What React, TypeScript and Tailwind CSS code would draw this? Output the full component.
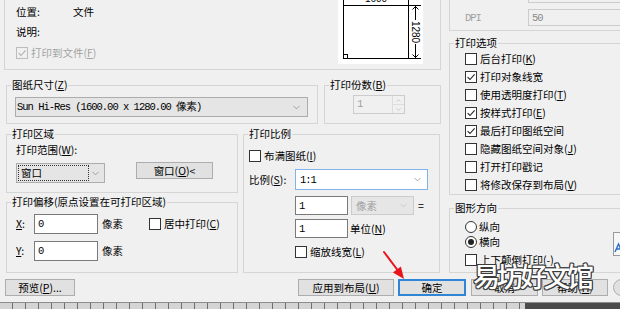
import { ChevronDown, ChevronUp } from "lucide-react";
import type { ReactNode } from "react";

const mono = "font-['Liberation_Mono',monospace] text-[10.5px] tracking-[-1px]";

function Group({ label, className = "", children }: { label?: ReactNode; className?: string; children?: ReactNode }) {
    return (
        <div className={`relative shrink-0 border border-[#d5d5d5] ${className}`}>
            {label && (
                <span className="absolute left-[4px] top-[-9px] whitespace-nowrap bg-[#f0f0f0] px-[1px] leading-[16px]">
                    {label}
                </span>
            )}
            {children}
        </div>
    );
}

function Check({ checked = false, disabled = false, children }: { checked?: boolean; disabled?: boolean; children: ReactNode }) {
    return (
        <div className="flex h-[18px] items-center whitespace-nowrap">
            <span
                className={`flex h-[12px] w-[12px] shrink-0 items-center justify-center border ${
                    disabled ? "border-[#bcbcbc] bg-[#f0f0f0]" : "border-[#333333] bg-white"
                }`}
            >
                {checked && (
                    <svg width="10" height="10" viewBox="0 0 10 10">
                        <path d="M1.6 5.1 4 7.5 8.6 2.3" fill="none" stroke={disabled ? "#b0b0b0" : "#222"} strokeWidth="1.1" />
                    </svg>
                )}
            </span>
            <span className={`ml-[3px] ${disabled ? "text-[#a3a3a3]" : ""}`}>{children}</span>
        </div>
    );
}

function Radio({ checked = false, children }: { checked?: boolean; children: ReactNode }) {
    return (
        <div className="flex h-[15px] items-center whitespace-nowrap">
            <span className="flex h-[12px] w-[12px] shrink-0 items-center justify-center rounded-full border border-[#333333] bg-white">
                {checked && <span className="h-[6px] w-[6px] rounded-full bg-[#222]" />}
            </span>
            <span className="ml-[2px]">{children}</span>
        </div>
    );
}

function Btn({ className = "", focused = false, children }: { className?: string; focused?: boolean; children?: ReactNode }) {
    return (
        <div
            className={`flex h-[17px] shrink-0 items-center justify-center whitespace-nowrap bg-[#e1e1e1] ${
                focused ? "border-2 border-[#2f86d6]" : "border border-[#adadad]"
            } ${className}`}
        >
            {children}
        </div>
    );
}

function Edit({ value, className = "" }: { value: string; className?: string }) {
    return (
        <div className={`flex shrink-0 items-center border border-[#7a7a7a] bg-white pl-[3px] ${mono} ${className}`}>
            {value}
        </div>
    );
}

function PaperPreview() {
    return (
        <svg width="85" height="75" viewBox="0 0 85 75">
            <line x1="5.5" y1="3" x2="5.5" y2="16" stroke="#000" />
            <line x1="70.5" y1="3" x2="70.5" y2="16" stroke="#000" />
            <line x1="6" y1="9.5" x2="25" y2="9.5" stroke="#000" />
            <line x1="51" y1="9.5" x2="70" y2="9.5" stroke="#000" />
            <text x="38" y="13" textAnchor="middle" fontSize="10" fontFamily="Liberation Sans, sans-serif">
                1600
            </text>
            <rect x="5.5" y="16.5" width="65" height="53" fill="#fff" stroke="#000" />
            <rect x="5.5" y="65.5" width="4" height="4" fill="none" stroke="#000" />
            <line x1="71" y1="16.5" x2="83" y2="16.5" stroke="#000" />
            <line x1="71" y1="69.5" x2="83" y2="69.5" stroke="#000" />
            <line x1="77.5" y1="17" x2="77.5" y2="31" stroke="#000" />
            <line x1="77.5" y1="55" x2="77.5" y2="69" stroke="#000" />
            <path d="M74.5 20.5 77.5 17.5 80.5 20.5 M74.5 65.5 77.5 68.5 80.5 65.5" fill="none" stroke="#000" />
            <text
                transform="translate(74 43) rotate(90)"
                textAnchor="middle"
                fontSize="10"
                fontFamily="Liberation Sans, sans-serif"
            >
                1280
            </text>
        </svg>
    );
}

export default function App() {
    return (
        <div className="relative h-[309px] w-[620px] overflow-hidden bg-[#f0f0f0] font-['Noto_Sans_CJK_SC',sans-serif] text-[10.5px] leading-[16px] text-black">
            <div className="flex pl-[4px]">
                {/* left side */}
                <div className="flex w-[438px] shrink-0 flex-col">
                    {/* printer */}
                    <Group className="mt-[-12px] flex h-[82px] w-[437px]">
                        <div className="flex flex-col pl-[11px] pt-[13px]">
                            <div className="flex h-[20px] items-center">
                                <span className="w-[57px]">位置:</span>
                                <span>文件</span>
                            </div>
                            <div className="flex h-[20px] items-center">说明:</div>
                            <div className="mt-[2px]">
                                <Check checked disabled>
                                    打印到文件(<u>F</u>)
                                </Check>
                            </div>
                        </div>
                        <div className="ml-auto mr-[17px] h-[75px] w-[85px] bg-white">
                            <PaperPreview />
                        </div>
                    </Group>

                    {/* paper size + copies */}
                    <div className="mt-[15px] flex">
                        <Group
                            label={
                                <>
                                    图纸尺寸(<u>Z</u>)
                                </>
                            }
                            className="ml-[2px] h-[39px] w-[312px]"
                        >
                            <div className="ml-[8px] mt-[11px] flex h-[20px] w-[293px] items-center border border-[#adadad] bg-[#e5e5e5] pl-[1px]">
                                <span className={`${mono} whitespace-nowrap`}>Sun Hi-Res (1600.00 x 1280.00 像素)</span>
                                <ChevronDown className="ml-auto mr-[5px]" size={11} strokeWidth={1} color="#555" />
                            </div>
                        </Group>
                        <Group
                            label={
                                <>
                                    打印份数(<u>B</u>)
                                </>
                            }
                            className="ml-[6px] h-[39px] w-[117px]"
                        >
                            <div className="ml-[28px] mt-[9px] flex h-[19px] w-[52px] border border-[#cccccc] bg-[#f0f0f0]">
                                <span className={`pl-[3px] leading-[17px] text-[#a0a0a0] ${mono}`}>1</span>
                                <div className="ml-auto flex w-[12px] flex-col border-l border-[#dddddd]">
                                    <div className="flex flex-1 items-center justify-center border-b border-[#dddddd]">
                                        <ChevronUp size={7} strokeWidth={1.5} color="#999" />
                                    </div>
                                    <div className="flex flex-1 items-center justify-center">
                                        <ChevronDown size={7} strokeWidth={1.5} color="#999" />
                                    </div>
                                </div>
                            </div>
                        </Group>
                    </div>

                    {/* area / offset / scale */}
                    <div className="mt-[10px] flex">
                        <div className="ml-[2px] flex w-[232px] shrink-0 flex-col">
                            <Group label="打印区域" className="h-[59px] w-[232px]">
                                <div className="pl-[9px] pt-[6px]">
                                    <div className="flex h-[18px] items-center">
                                        打印范围(<u>W</u>):
                                    </div>
                                    <div className="mt-[3px] flex items-start">
                                        <div className="mt-[1px] flex h-[20px] w-[89px] shrink-0 items-center border border-[#adadad] bg-[#e5e5e5] pl-[1px]">
                                            <span className="flex h-[16px] w-[71px] items-center border border-dotted border-[#333] pl-[2px]">
                                                窗口
                                            </span>
                                            <ChevronDown className="ml-auto mr-[3px]" size={11} strokeWidth={1} color="#555" />
                                        </div>
                                        <Btn className="ml-[31px] w-[77px]">
                                            窗口(<u>O</u>)&lt;
                                        </Btn>
                                    </div>
                                </div>
                            </Group>
                            <Group label="打印偏移(原点设置在可打印区域)" className="mt-[9px] h-[71px] w-[232px]">
                                <div className="pl-[9px] pt-[11px]">
                                    <div className="flex h-[20px] items-center">
                                        <span className="w-[18px]">
                                            <u>X</u>:
                                        </span>
                                        <Edit value="0" className="h-[20px] w-[64px]" />
                                        <span className="ml-[4px]">像素</span>
                                        <div className="ml-[26px]">
                                            <Check>
                                                居中打印(<u>C</u>)
                                            </Check>
                                        </div>
                                    </div>
                                    <div className="mt-[7px] flex h-[20px] items-center">
                                        <span className="w-[18px]">
                                            <u>Y</u>:
                                        </span>
                                        <Edit value="0" className="h-[20px] w-[64px]" />
                                        <span className="ml-[4px]">像素</span>
                                    </div>
                                </div>
                            </Group>
                        </div>

                        <Group label="打印比例" className="ml-[5px] h-[139px] w-[197px]">
                            <div className="pl-[5px] pt-[12px]">
                                <Check>
                                    布满图纸(<u>I</u>)
                                </Check>
                                <div className="mt-[4px] flex h-[21px] items-center">
                                    <span className="w-[46px]">
                                        比例(<u>S</u>):
                                    </span>
                                    <div className="flex h-[21px] w-[133px] items-center border border-[#7eb4ea] bg-white pl-[4px]">
                                        <span className={mono}>1:1</span>
                                        <ChevronDown className="ml-auto mr-[4px]" size={11} strokeWidth={1} color="#444" />
                                    </div>
                                </div>
                                <div className="ml-[46px] mt-[6px] flex h-[19px] items-center">
                                    <Edit value="1" className="h-[19px] w-[53px]" />
                                    <div className="ml-[3px] flex h-[19px] w-[63px] items-center border border-[#cccccc] bg-[#e6e6e6] pl-[4px] text-[#a0a0a0]">
                                        像素
                                        <ChevronDown className="ml-auto mr-[4px]" size={11} strokeWidth={1} color="#aaa" />
                                    </div>
                                    <span className="ml-[4px]">=</span>
                                </div>
                                <div className="ml-[46px] mt-[4px] flex h-[19px] items-center">
                                    <Edit value="1" className="h-[19px] w-[53px]" />
                                    <span className="ml-[2px]">
                                        单位(<u>N</u>)
                                    </span>
                                </div>
                                <div className="ml-[46px] mt-[5px]">
                                    <Check>
                                        缩放线宽(<u>L</u>)
                                    </Check>
                                </div>
                            </div>
                        </Group>
                    </div>
                </div>

                {/* right side */}
                <div className="ml-[7px] flex w-[200px] shrink-0 flex-col">
                    <Group className="mt-[-20px] h-[51px] w-[200px]">
                        <div className="ml-[78px] mt-[5px] h-[17px] w-[110px] border border-[#cccccc] bg-[#f0f0f0]" />
                        <div className="mt-[6px] flex h-[17px] items-center pl-[15px]">
                            <span className={`w-[63px] text-[#a0a0a0] ${mono}`}>DPI</span>
                            <div className={`flex h-[17px] w-[110px] items-center border border-[#cccccc] bg-[#f0f0f0] pl-[3px] text-[#8a8a8a] ${mono}`}>
                                50
                            </div>
                        </div>
                    </Group>

                    <Group label="打印选项" className="mt-[12px] h-[152px] w-[200px]">
                        <div className="pl-[15px] pt-[6px]">
                            <Check>
                                后台打印(<u>K</u>)
                            </Check>
                            <Check checked>打印对象线宽</Check>
                            <Check>
                                使用透明度打印(<u>T</u>)
                            </Check>
                            <Check checked>
                                按样式打印(<u>E</u>)
                            </Check>
                            <Check checked>最后打印图纸空间</Check>
                            <Check>
                                隐藏图纸空间对象(<u>J</u>)
                            </Check>
                            <Check>打开打印戳记</Check>
                            <Check>
                                将修改保存到布局(<u>V</u>)
                            </Check>
                        </div>
                    </Group>

                    <Group label="图形方向" className="mt-[13px] h-[65px] w-[200px]">
                        <div className="flex pl-[15px] pt-[10px]">
                            <div className="flex w-[148px] flex-col">
                                <Radio>纵向</Radio>
                                <Radio checked>横向</Radio>
                                <div className="mt-[2px]">
                                    <Check>上下颠倒打印(-)</Check>
                                </div>
                            </div>
                            <svg className="mt-[13px] shrink-0" width="26" height="24" viewBox="0 0 26 24">
                                <rect x="0.5" y="0.5" width="25" height="23" fill="#f7f7f7" stroke="#9a9a9a" />
                                <path d="M2 20 5.5 12 9 20 M3.5 17h4" fill="none" stroke="#2a6fc9" strokeWidth="1.4" />
                            </svg>
                        </div>
                    </Group>
                </div>
            </div>

            {/* buttons */}
            <div className="mt-[6px] flex pl-[5px]">
                <Btn className="w-[70px]">
                    预览(<u>P</u>)...
                </Btn>
                <Btn className="ml-[223px] w-[96px]">
                    应用到布局(<u>U</u>)
                </Btn>
                <Btn focused className="ml-[4px] w-[68px]">
                    确定
                </Btn>
                <Btn className="ml-[5px] w-[67px]">取消</Btn>
                <Btn className="ml-[4px] w-[66px]">
                    帮助(<u>H</u>)
                </Btn>
                <Btn className="ml-[5px] w-[18px] rounded-full">?</Btn>
            </div>

            {/* drawing area behind the dialog */}
            <div className="mt-[6px] flex h-[8px] border-t border-[#8c8c8c]">
                <div className="flex w-[525px] shrink-0 bg-[#d4d4d4]">
                    {Array.from({ length: 40 }).map((_, i) => (
                        <div key={i} className="h-full w-[13px] shrink-0 border-r border-[#6e6e6e]" />
                    ))}
                </div>
                <div className="flex-1 bg-[#4b4b4b]" />
            </div>

            {/* red arrow */}
            <svg className="absolute left-[378px] top-[246px]" width="32" height="38" viewBox="0 0 32 38">
                <line x1="6" y1="6" x2="19.5" y2="24" stroke="#e8141b" strokeWidth="2" strokeLinecap="round" />
                <path d="M26 33 22.9 20.4 14.9 26.4Z" fill="#e8141b" />
            </svg>

            {/* watermark */}
            <div className="pointer-events-none absolute left-[473px] top-[259px] whitespace-nowrap font-['Noto_Sans_CJK_SC',sans-serif] text-[27px] font-medium leading-[34px] tracking-[-3.5px] text-white [text-shadow:1px_1px_0_#3c3c3c,-1px_-1px_0_#3c3c3c,1px_-1px_0_#3c3c3c,-1px_1px_0_#3c3c3c,0_1px_0_#3c3c3c,0_-1px_0_#3c3c3c,1px_0_0_#3c3c3c,-1px_0_0_#3c3c3c]">
                易坊好文馆
            </div>
        </div>
    );
}
